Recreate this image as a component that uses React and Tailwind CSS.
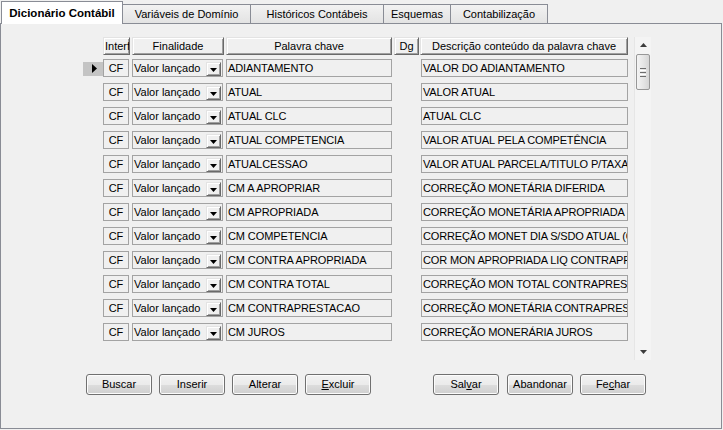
import React from "react";

const rows = [
  ["ADIANTAMENTO", "VALOR DO ADIANTAMENTO"],
  ["ATUAL", "VALOR ATUAL"],
  ["ATUAL CLC", "ATUAL CLC"],
  ["ATUAL COMPETENCIA", "VALOR ATUAL PELA COMPETÊNCIA"],
  ["ATUALCESSAO", "VALOR ATUAL PARCELA/TITULO P/TAXA CESSAO"],
  ["CM A APROPRIAR", "CORREÇÃO MONETÁRIA DIFERIDA"],
  ["CM APROPRIADA", "CORREÇÃO MONETÁRIA APROPRIADA"],
  ["CM COMPETENCIA", "CORREÇÃO MONET DIA S/SDO ATUAL (COMPETÊNCIA)"],
  ["CM CONTRA APROPRIADA", "COR MON APROPRIADA LIQ CONTRAPRESTAÇÃO"],
  ["CM CONTRA TOTAL", "CORREÇÃO MON TOTAL CONTRAPRESTAÇÃO"],
  ["CM CONTRAPRESTACAO", "CORREÇÃO MONETÁRIA CONTRAPRESTAÇÃO"],
  ["CM JUROS", "CORREÇÃO MONERÁRIA JUROS"],
];

function HeaderCell({ w, children, className = "" }) {
  return (
    <div
      className={`h-[18px] flex items-center justify-center overflow-hidden whitespace-nowrap bg-[#f0f0f0] border border-t-[#e3e3e3] border-l-[#e3e3e3] border-b-[#696969] border-r-[#696969] shadow-[inset_1px_1px_0_#ffffff,inset_-1px_-1px_0_#a0a0a0] ${w} ${className}`}
    >
      {children}
    </div>
  );
}

function Box({ w, children, className = "" }) {
  return (
    <div
      className={`h-[18px] flex items-center overflow-hidden whitespace-nowrap border border-[#a3a3a3] bg-[#f0f0f0] ${w} ${className}`}
    >
      {children}
    </div>
  );
}

function DropBtn() {
  return (
    <div className="h-[14px] w-[15px] mr-[1px] mt-[1px] flex items-end justify-center pb-[3px] bg-[#f0f0f0] border border-t-[#e3e3e3] border-l-[#e3e3e3] border-b-[#696969] border-r-[#696969] shadow-[inset_1px_1px_0_#ffffff,inset_-1px_-1px_0_#a0a0a0] shrink-0">
      <svg width="7" height="4" viewBox="0 0 7 4">
        <path d="M0 0H7L3.5 4Z" fill="#000" />
      </svg>
    </div>
  );
}

function Row({ k, d, active }) {
  return (
    <div className={`flex items-center h-[18px] ${active ? "mt-[4px]" : "mt-[6px]"}`}>
      <div className="w-[20px] h-[18px] flex items-center">
        {active && (
          <div className="w-[20px] h-[14px] mt-[1px] bg-[#c4c4c4] flex items-center pl-[9px]">
            <svg width="5" height="9" viewBox="0 0 5 9">
              <path d="M0 0L5 4.5L0 9Z" fill="#000" />
            </svg>
          </div>
        )}
      </div>
      <Box w="w-[26px]" className="justify-center">CF</Box>
      <Box w="w-[91px] ml-[3px]" className="justify-between">
        <span className="pl-[1px]">Valor lançado</span>
        <DropBtn />
      </Box>
      <Box w="w-[166px] ml-[3px]" className="pl-[1px] tracking-[-0.1px]">{k}</Box>
      <Box w="w-[207px] ml-[29px]" className="pl-[1px] tracking-[-0.15px]">{d}</Box>
    </div>
  );
}

function Btn({ children, className = "" }) {
  return (
    <div
      className={`w-[66px] h-[21px] flex items-center justify-center rounded-[3px] border border-[#707070] bg-[linear-gradient(#f2f2f2_0%,#ebebeb_50%,#dddddd_51%,#cfcfcf_100%)] shadow-[inset_0_0_0_1px_#fcfcfc] ${className}`}
    >
      {children}
    </div>
  );
}

export default function App() {
  return (
    <div className="w-[723px] h-[430px] bg-[#f0f0f0] text-[11px] text-black font-['Liberation_Sans',Arial,sans-serif] leading-none select-none">
      {/* Tabs */}
      <div className="flex items-end h-[23px] pl-[1px]">
        <div className="relative z-10 w-[122px] h-[23px] -mb-px bg-white border border-b-0 border-[#898c95] flex items-center justify-center font-bold text-[11.5px] pt-[1px]">
          Dicionário Contábil
        </div>
        <div className="w-[128px] h-[19px] border-t border-r border-[#898c95] bg-[linear-gradient(#f2f2f2,#e3e3e3)] flex items-center justify-center">
          Variáveis de Domínio
        </div>
        <div className="w-[133px] h-[19px] border-t border-r border-[#898c95] bg-[linear-gradient(#f2f2f2,#e3e3e3)] flex items-center justify-center">
          Históricos Contábeis
        </div>
        <div className="w-[67px] h-[19px] border-t border-r border-[#898c95] bg-[linear-gradient(#f2f2f2,#e3e3e3)] flex items-center justify-center">
          Esquemas
        </div>
        <div className="w-[97px] h-[19px] border-t border-r border-[#898c95] bg-[linear-gradient(#f2f2f2,#e3e3e3)] flex items-center justify-center">
          Contabilização
        </div>
      </div>

      {/* Panel */}
      <div className="w-[722px] h-[406px] border border-[#898c95] bg-[#f0f0f0] flex flex-col">
        <div className="flex mt-[13px] ml-[82px]">
          <div className="flex flex-col w-[546px]">
            <div className="flex items-center">
              <div className="w-[20px]" />
              <HeaderCell w="w-[27px]" className="justify-start pl-[1px]">Interf</HeaderCell>
              <HeaderCell w="w-[92px] ml-[2px]">Finalidade</HeaderCell>
              <HeaderCell w="w-[166px] ml-[2px]">Palavra chave</HeaderCell>
              <HeaderCell w="w-[25px] ml-[2px]">Dg</HeaderCell>
              <HeaderCell w="w-[208px] ml-[1px]">Descrição conteúdo da palavra chave</HeaderCell>
            </div>
            {rows.map(([k, d], i) => (
              <Row key={i} k={k} d={d} active={i === 0} />
            ))}
          </div>
          {/* Scrollbar */}
          <div className="ml-[5px] w-[17px] h-[323px] bg-[#f4f4f4] border-l border-[#e6e6e6] flex flex-col">
            <div className="h-[15px] flex items-center justify-center">
              <svg width="7" height="4" viewBox="0 0 7 4">
                <path d="M3.5 0L7 4H0Z" fill="#3c3c3c" />
              </svg>
            </div>
            <div className="ml-[1px] mt-[2px] w-[14px] h-[36px] rounded-[2px] border border-[#979797] bg-[linear-gradient(90deg,#f4f4f4,#e6e6e6_50%,#d6d6d6)] flex flex-col items-center justify-center gap-[1px]">
              <div className="w-[6px] h-[1px] bg-[#6d6d6d]" />
              <div className="w-[6px] h-[1px] bg-[#ffffff]" />
              <div className="w-[6px] h-[1px] bg-[#6d6d6d]" />
              <div className="w-[6px] h-[1px] bg-[#ffffff]" />
              <div className="w-[6px] h-[1px] bg-[#6d6d6d]" />
            </div>
            <div className="flex-1" />
            <div className="h-[15px] flex items-center justify-center mb-[1px]">
              <svg width="7" height="4" viewBox="0 0 7 4">
                <path d="M0 0H7L3.5 4Z" fill="#3c3c3c" />
              </svg>
            </div>
          </div>
        </div>

        {/* Buttons */}
        <div className="flex mt-[14px] ml-[85px]">
          <Btn>Buscar</Btn>
          <Btn className="ml-[7px]">Inserir</Btn>
          <Btn className="ml-[7px]">Alterar</Btn>
          <Btn className="ml-[7px]">
            <span><span className="underline">E</span>xcluir</span>
          </Btn>
          <Btn className="ml-[62px]">
            <span>Sal<span className="underline">v</span>ar</span>
          </Btn>
          <Btn className="ml-[8px]">Abandonar</Btn>
          <Btn className="ml-[7px]">
            <span>Fe<span className="underline">c</span>har</span>
          </Btn>
        </div>
      </div>
    </div>
  );
}
